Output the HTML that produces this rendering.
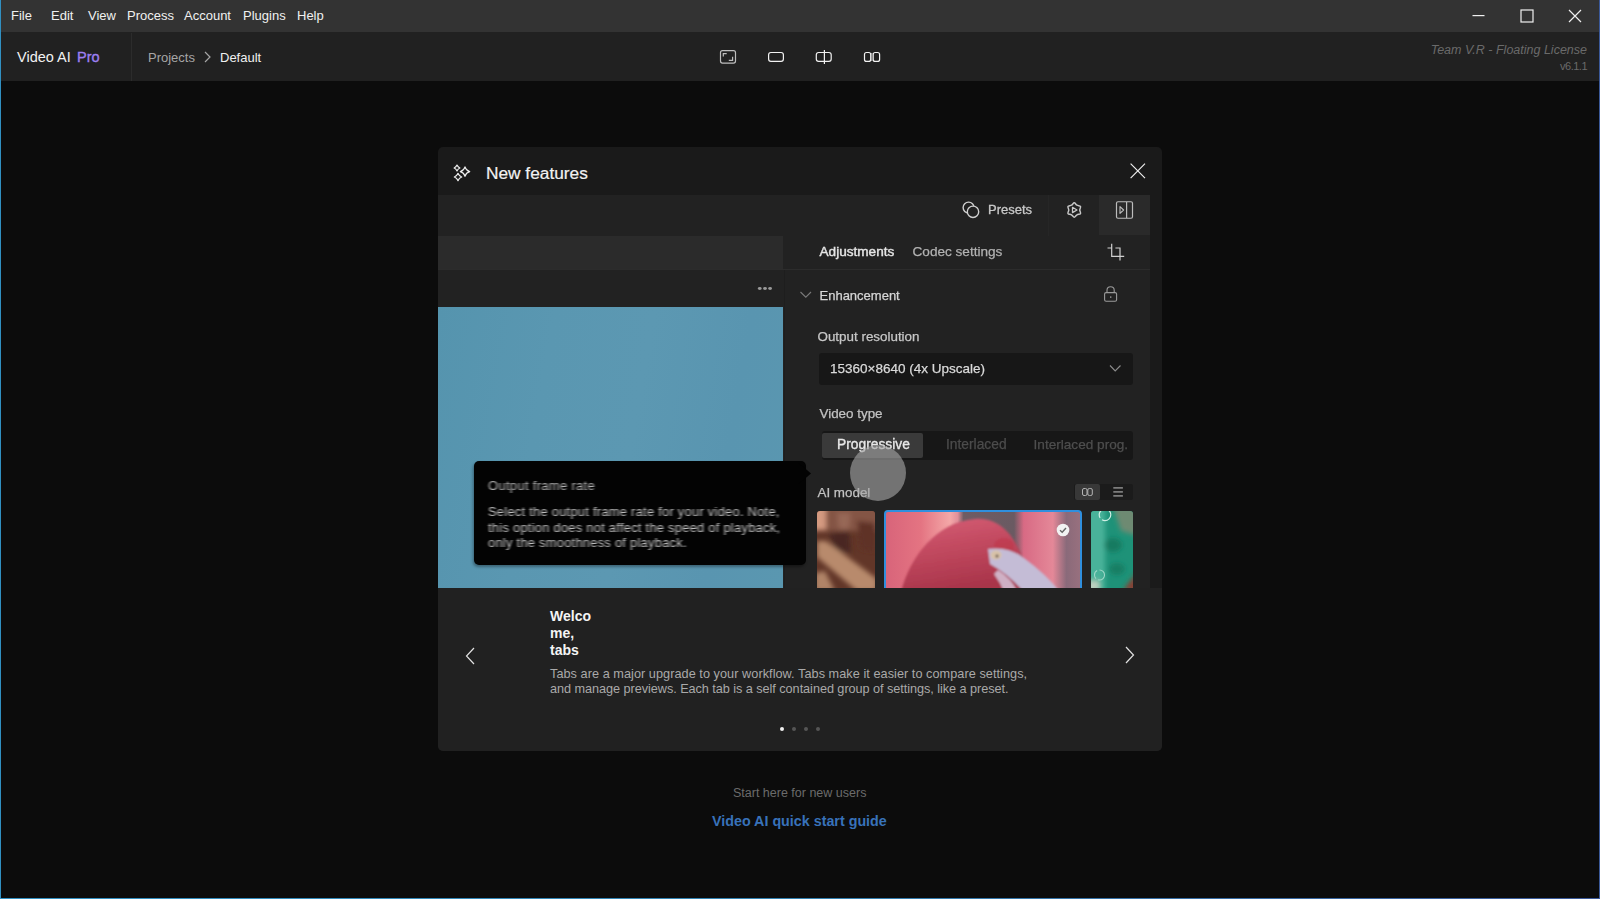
<!DOCTYPE html>
<html><head><meta charset="utf-8">
<style>
*{margin:0;padding:0;box-sizing:border-box}
html,body{width:1600px;height:899px;overflow:hidden;background:#0c0c0c;font-family:"Liberation Sans",sans-serif}
.t{position:absolute;white-space:nowrap}
.abs{position:absolute}
#menubar{position:absolute;left:0;top:0;width:1600px;height:32px;background:#333333}
#menubar .m{position:absolute;top:8px;font-size:13px;color:#f0f0f0;line-height:16px}
#header{position:absolute;left:0;top:32px;width:1600px;height:49px;background:#212121}
#bl{position:absolute;left:0;top:0;width:1px;height:899px;background:#3190c2}
#br{position:absolute;right:0;top:0;width:1px;height:899px;background:#3a5898}
#bb{position:absolute;left:0;bottom:0;width:1600px;height:1px;background:linear-gradient(90deg,#3190c2,#3080b0 50%,#3a5898)}
#modal{position:absolute;left:438px;top:147px;width:724px;height:604px;background:#1a1a1a;border-radius:5px;overflow:hidden}
#shot{position:absolute;left:0;top:48px;width:712px;height:393px;background:#222;overflow:hidden}
#bottom{position:absolute;left:0;top:441px;width:724px;height:163px;background:#212121}
.blur{filter:blur(0.5px)}
.t.blur{-webkit-text-stroke-width:0.25px}
</style></head><body>
<div id="menubar">
  <div class="m" style="left:11px">File</div>
  <div class="m" style="left:51px">Edit</div>
  <div class="m" style="left:88px">View</div>
  <div class="m" style="left:127px">Process</div>
  <div class="m" style="left:184px">Account</div>
  <div class="m" style="left:243px">Plugins</div>
  <div class="m" style="left:297px">Help</div>
  <!-- window controls -->
  <svg class="abs" style="left:1460px;top:0" width="140" height="32" viewBox="0 0 140 32">
    <rect x="12.5" y="15" width="12" height="1.2" fill="#f0f0f0"/>
    <rect x="61" y="10" width="12" height="12" fill="none" stroke="#f0f0f0" stroke-width="1.2"/>
    <path d="M109 10 L121 22 M121 10 L109 22" stroke="#f0f0f0" stroke-width="1.2"/>
  </svg>
</div>
<div id="header">
  <div class="t" style="left:17px;top:17.6px;font-size:14.5px;line-height:14px;color:#f2f2f2">Video AI</div>
  <div class="t" style="left:77px;top:17.6px;font-size:14.5px;line-height:14px;color:#9d7ff2;-webkit-text-stroke:0.35px #9d7ff2">Pro</div>
  <div class="abs" style="left:131px;top:1px;width:1px;height:48px;background:#2c2c2c"></div>
  <div class="t" style="left:148px;top:19px;font-size:13px;line-height:13px;color:#a6a6a6">Projects</div>
  <svg class="abs" style="left:202px;top:18px" width="10" height="14" viewBox="0 0 10 14"><path d="M3 2 L8 7 L3 12" fill="none" stroke="#a6a6a6" stroke-width="1.2"/></svg>
  <div class="t" style="left:220px;top:19px;font-size:13px;line-height:13px;color:#f0f0f0">Default</div>
  <!-- view icons -->
  <svg class="abs" style="left:710px;top:10px" width="180" height="30" viewBox="0 0 180 30">
    <rect x="10.5" y="8.7" width="15" height="12.4" rx="2" fill="none" stroke="#bdbdbd" stroke-width="1.2"/>
    <path d="M13.3 14.6 V11.6 H16.7" fill="none" stroke="#bdbdbd" stroke-width="1.2"/>
    <path d="M18.8 18.3 H22.6 V14.8" fill="none" stroke="#bdbdbd" stroke-width="1.2"/>
    <rect x="58.6" y="10.5" width="14.8" height="8.9" rx="2.3" fill="none" stroke="#f2f2f2" stroke-width="1.2"/>
    <rect x="106.3" y="10.5" width="14.9" height="8.9" rx="2.3" fill="none" stroke="#f2f2f2" stroke-width="1.2"/>
    <path d="M114.4 7.9 V22" stroke="#f2f2f2" stroke-width="1.2"/>
    <rect x="154.5" y="10.5" width="6.2" height="8.9" rx="2" fill="none" stroke="#f2f2f2" stroke-width="1.2"/>
    <rect x="163.2" y="10.5" width="6.4" height="8.9" rx="2" fill="none" stroke="#f2f2f2" stroke-width="1.2"/>
    <rect x="161" y="11" width="1.6" height="8" fill="#9a9a9a"/>
  </svg>
  <div class="t" style="right:13px;top:11.8px;font-size:12.5px;line-height:13px;color:#6a6a6a;font-style:italic">Team V.R - Floating License</div>
  <div class="t" style="right:13px;top:27.5px;font-size:11px;line-height:13px;color:#6a6a6a;letter-spacing:-0.5px">v6.1.1</div>
</div>

<div id="modal">
  <!-- header -->
  <svg class="abs" style="left:14px;top:16px" width="20" height="20" viewBox="0 0 20 20"><path d="M5 2.1 Q5.87 4.13 7.9 5 Q5.87 5.87 5 7.9 Q4.13 5.87 2.1 5 Q4.13 4.13 5 2.1Z" fill="none" stroke="#ececec" stroke-width="1.2" stroke-linejoin="round"/><path d="M13 3.8999999999999995 Q14.03 7.57 17.7 8.6 Q14.03 9.63 13 13.3 Q11.97 9.63 8.3 8.6 Q11.97 7.57 13 3.8999999999999995Z" fill="none" stroke="#ececec" stroke-width="1.2" stroke-linejoin="round"/><path d="M6 10.3 Q7.04 12.96 9.7 14 Q7.04 15.04 6 17.7 Q4.96 15.04 2.3 14 Q4.96 12.96 6 10.3Z" fill="none" stroke="#ececec" stroke-width="1.2" stroke-linejoin="round"/></svg>
  <div class="t" style="left:48px;top:17.8px;font-size:17.3px;line-height:17px;color:#f2f2f2;-webkit-text-stroke:0.2px #f2f2f2">New features</div>
  <svg class="abs" style="left:690px;top:15px" width="20" height="20" viewBox="0 0 20 20">
    <path d="M2.6 1.6 L17 16.1 M17 1.6 L2.6 16.1" stroke="#f0f0f0" stroke-width="1.15"/>
  </svg>

  <!-- embedded screenshot -->
  <div id="shot">
    <!-- top toolbar -->
    <svg class="abs blur" style="left:520px;top:4px" width="30" height="30" viewBox="0 0 30 30">
      <circle cx="10.6" cy="8.6" r="5.5" fill="none" stroke="#d0d0d0" stroke-width="1.4"/>
      <circle cx="15" cy="12.8" r="5.7" fill="#222" stroke="#d0d0d0" stroke-width="1.4"/>
    </svg>
    <div class="t blur" style="left:550px;top:8.4px;font-size:13px;line-height:13px;color:#c8c8c8;-webkit-text-stroke:0.3px #c8c8c8">Presets</div>
    <div class="abs" style="left:610px;top:0;width:1px;height:41px;background:#262626"></div>
    <svg class="abs blur" style="left:626px;top:4.75px" width="20" height="20" viewBox="0 0 20 20">
      <path d="M10.25 2.80 C11.30 2.80 11.80 4.55 13.00 5.24 C14.20 5.93 15.96 5.49 16.49 6.40 C17.01 7.31 15.75 8.62 15.75 10.00 C15.75 11.38 17.01 12.69 16.49 13.60 C15.96 14.51 14.20 14.07 13.00 14.76 C11.80 15.45 11.30 17.20 10.25 17.20 C9.20 17.20 8.70 15.45 7.50 14.76 C6.30 14.07 4.54 14.51 4.01 13.60 C3.49 12.69 4.75 11.38 4.75 10.00 C4.75 8.62 3.49 7.31 4.01 6.40 C4.54 5.49 6.30 5.93 7.50 5.24 C8.70 4.55 9.20 2.80 10.25 2.80Z" fill="none" stroke="#c8c8c8" stroke-width="1.45"/>
      <path d="M8.5 7.3 L13 9.95 L8.5 12.6Z" fill="none" stroke="#c8c8c8" stroke-width="1.3" stroke-linejoin="round"/>
    </svg>
    <div class="abs" style="left:661px;top:0;width:51px;height:40px;background:#2a2a2a"></div>
    <svg class="abs blur" style="left:676px;top:4px" width="22" height="22" viewBox="0 0 22 22">
      <rect x="2.5" y="2.75" width="16" height="16.5" rx="1.5" fill="none" stroke="#bcbcbc" stroke-width="1.2"/>
      <path d="M12.6 3 V19" stroke="#bcbcbc" stroke-width="1.2"/>
      <path d="M6 7.6 L9.6 11 L6 14.4Z" fill="none" stroke="#bcbcbc" stroke-width="1.1" stroke-linejoin="round"/>
    </svg>

    <!-- left pane -->
    <div class="abs" style="left:0;top:41px;width:345px;height:33px;background:#2b2b2b"></div>
    <div class="abs" style="left:0;top:74px;width:712px;height:1px;background:#2c2c2c"></div>
    <div class="abs" style="left:346px;top:75px;width:1px;height:318px;background:#1e1e1e"></div>
    <svg class="abs" style="left:316px;top:88px" width="22" height="12" viewBox="0 0 22 12"><g fill="#9a9a9a" style="filter:blur(0.5px)"><ellipse cx="5.75" cy="5.5" rx="1.9" ry="1.4"/><ellipse cx="11" cy="5.5" rx="1.9" ry="1.4"/><ellipse cx="16.1" cy="5.5" rx="1.9" ry="1.4"/></g></svg>
    <div class="abs" style="left:0;top:112px;width:345px;height:281px;background:linear-gradient(100deg,#5594ae 0%,#5a97b1 30%,#5c98b2 55%,#5995b0 80%,#5a97b0 100%)"></div>

    <!-- right pane -->
    <div class="t blur" style="left:381.5px;top:50px;font-size:13.6px;line-height:13px;color:#e6e6e6;-webkit-text-stroke:0.4px #e6e6e6">Adjustments</div>
    <div class="t blur" style="left:474.5px;top:50px;font-size:13.6px;line-height:13px;color:#b2b2b2">Codec settings</div>
    <svg class="abs blur" style="left:666px;top:46px" width="24" height="24" viewBox="0 0 24 24">
      <path d="M3.5 7 H7.7 M7.7 2.8 V15.3 H20.2 M11.4 7 H16 V15.3 M16 15.3 V19.5" fill="none" stroke="#d0d0d0" stroke-width="1.2"/>
    </svg>
    <svg class="abs blur" style="left:360px;top:94px" width="16" height="12" viewBox="0 0 16 12">
      <path d="M2.5 3 L7.8 8.2 L13 3" fill="none" stroke="#7a7a7a" stroke-width="1.1"/>
    </svg>
    <div class="t blur" style="left:381.5px;top:93.8px;font-size:13px;line-height:13px;color:#d6d6d6">Enhancement</div>
    <svg class="abs blur" style="left:664px;top:90px" width="18" height="18" viewBox="0 0 18 18">
      <path d="M5 7.5 V5.3 Q5 1.8 8.6 1.8 Q12.2 1.8 12.2 5.3 V7.5" fill="none" stroke="#9a9a9a" stroke-width="1.1"/>
      <rect x="2.6" y="7.6" width="12" height="8.6" rx="1.5" fill="none" stroke="#9a9a9a" stroke-width="1.1"/>
      <rect x="8" y="11.4" width="1.4" height="1.4" fill="#9a9a9a"/>
    </svg>
    <div class="t blur" style="left:379.5px;top:134.5px;font-size:13.4px;line-height:13px;color:#c8c8c8">Output resolution</div>
    <div class="abs" style="left:380.5px;top:157.5px;width:314px;height:32px;background:#171717;border-radius:3px"></div>
    <div class="t blur" style="left:392px;top:167.2px;font-size:13.5px;line-height:13px;color:#dadada">15360×8640 (4x Upscale)</div>
    <svg class="abs blur" style="left:670px;top:167px" width="14" height="12" viewBox="0 0 14 12">
      <path d="M2 3.5 L7.2 9 L12.5 3.5" fill="none" stroke="#8c8c8c" stroke-width="1.1"/>
    </svg>
    <div class="t blur" style="left:381.5px;top:212px;font-size:13.4px;line-height:13px;color:#c2c2c2">Video type</div>
    <div class="abs" style="left:384px;top:235.5px;width:310.5px;height:29.5px;background:#171717;border-radius:3px"></div>
    <div class="abs" style="left:384px;top:237.7px;width:100.5px;height:25.6px;background:#3a3a3a;border-radius:2px"></div>
    <div class="t blur" style="left:399px;top:243.1px;font-size:13.8px;line-height:13px;color:#e8e8e8;-webkit-text-stroke:0.35px #e8e8e8">Progressive</div>
    <div class="t blur" style="left:508px;top:243.1px;font-size:13.8px;line-height:13px;color:#4c4c4c">Interlaced</div>
    <div class="t blur" style="left:595.6px;top:243.1px;font-size:13.6px;line-height:13px;color:#4e4e4e">Interlaced prog.</div>
    <div class="t blur" style="left:379.5px;top:291px;font-size:13.4px;line-height:13px;color:#c2c2c2">AI model</div>
    <div class="abs" style="left:636px;top:288.7px;width:58.5px;height:16.5px;background:#1b1b1b;border-radius:2px"></div>
    <div class="abs" style="left:636.5px;top:288.7px;width:25.5px;height:16.5px;background:#383838;border-radius:2px"></div>
    <svg class="abs blur" style="left:636px;top:288px" width="60" height="18" viewBox="0 0 60 18">
      <rect x="8.5" y="5.5" width="4.5" height="7" rx="1.5" fill="none" stroke="#b4b4b4" stroke-width="1"/>
      <rect x="13.8" y="5.5" width="4.5" height="7" rx="1.5" fill="none" stroke="#b4b4b4" stroke-width="1"/>
      <path d="M39.3 4.9 H48.9 M39.3 8.9 H48.9 M39.3 12.9 H48.9" stroke="#7c7c7c" stroke-width="1.7"/>
    </svg>
    <!-- thumbnails -->
    <div class="abs" style="left:379px;top:316px;width:58px;height:77px;border-radius:3px 3px 0 0;overflow:hidden;background:#623628">
      <svg class="abs" style="left:0;top:0" width="58" height="77" viewBox="0 0 58 77"><filter id="fh" x="-20%" y="-20%" width="140%" height="140%"><feGaussianBlur stdDeviation="2.4"/></filter><g filter="url(#fh)">
        <rect x="-5" y="-5" width="70" height="25" fill="#845444"/>
        <rect x="-5" y="-5" width="14" height="24" fill="#d49a80"/>
        <path d="M12 22 L32 20 L34 42 L18 40Z" fill="#4a2820"/>
        <path d="M40 10 L58 12 L58 40 L44 38Z" fill="#5e3026"/>
        <path d="M0 30 L9 30 L60 68 L60 80 L40 80 L0 46Z" fill="#b88a6c"/>
        <path d="M-2 62 L8 60 L18 80 L-2 80Z" fill="#b08468"/>
        <path d="M20 2 L34 2 L32 18 L22 18Z" fill="#a07060" opacity="0.7"/>
      </g></svg>
    </div>
    <div class="abs" style="left:445.8px;top:315px;width:198.4px;height:78px;border:2px solid #2f8fde;border-bottom:none;border-radius:4px 4px 0 0;overflow:hidden;background:linear-gradient(90deg,#d8647a 0%,#e47482 18%,#f4a8a8 33%,#e0909a 37%,#6e5c64 40%,#6a5a62 66%,#d86a84 71%,#e48898 86%,#8a6a7a 93%,#98707e 100%)">
      <svg class="abs" style="left:0;top:0" width="196" height="78" viewBox="0 0 196 78"><filter id="ff" x="-10%" y="-10%" width="120%" height="120%"><feGaussianBlur stdDeviation="1.3"/></filter><g filter="url(#ff)">
        <linearGradient id="hg" x1="0" y1="0" x2="0.3" y2="1"><stop offset="0" stop-color="#d65e76"/><stop offset="0.5" stop-color="#c0485e"/><stop offset="1" stop-color="#a8344a"/></linearGradient><path d="M15 80 C24 45 50 10 89 7 C112 5 128 22 137 47 L150 80Z" fill="url(#hg)"/>
        <ellipse cx="118" cy="34" rx="10" ry="8" fill="#c02a3c" opacity="0.35"/>
        <path d="M102 37 Q122 34 138 46 Q160 62 174 80 L138 80 Q122 62 104 52Z" fill="#c4bcd6"/><path d="M112 58 Q125 66 132 80 L118 80 Q114 70 108 62Z" fill="#d8d0e4" opacity="0.8"/>
        <ellipse cx="110" cy="43" rx="5.5" ry="4.5" fill="#d8c2a8"/>
        <circle cx="111" cy="44" r="1.5" fill="#5a4a40"/>
      </g></svg>
      <svg class="abs" style="left:170.6px;top:11px" width="14" height="14" viewBox="0 0 14 14">
        <circle cx="7" cy="7" r="6.3" fill="#f2f2f2"/>
        <path d="M4 7.2 L6.2 9.3 L10 5" fill="none" stroke="#666" stroke-width="1.4"/>
      </svg>
    </div>
    <div class="abs" style="left:652.5px;top:316px;width:42.5px;height:77px;border-radius:3px 3px 0 0;overflow:hidden;background:#1e9278">
      <svg class="abs" style="left:0;top:0" width="43" height="77" viewBox="0 0 43 77"><filter id="ft" x="-20%" y="-20%" width="140%" height="140%"><feGaussianBlur stdDeviation="2.6"/></filter><g filter="url(#ft)">
        <rect x="-4" y="-4" width="18" height="85" fill="#48b29a"/>
        <path d="M22 -4 L47 -4 L47 25 L30 20Z" fill="#6e8a72"/>
        <ellipse cx="22" cy="34" rx="9" ry="7" fill="#127a60"/>
        <ellipse cx="26" cy="58" rx="8" ry="6" fill="#157e64"/>
        <path d="M34 77 L47 60 L47 80 L32 80Z" fill="#8a3c30"/>
        <rect x="-4" y="70" width="12" height="10" fill="#c0d0c0"/>
      </g></svg>
      <svg class="abs" style="left:0;top:0;filter:blur(0.5px)" width="43" height="77" viewBox="0 0 43 77">
        <circle cx="14" cy="3.8" r="5.8" fill="none" stroke="#cfeee4" stroke-width="1.2" stroke-dasharray="12 2.5"/>
        <circle cx="8.5" cy="64" r="5" fill="none" stroke="#9ed8c8" stroke-width="1.1" stroke-dasharray="9 2.5"/>
      </svg>
    </div>
    <!-- touch indicator -->
    <div class="abs" style="left:412px;top:250px;width:56px;height:56px;border-radius:50%;background:rgba(165,165,165,0.62);filter:blur(0.6px)"></div>
    <!-- tooltip -->
    <div class="abs" style="left:35.5px;top:266.3px;width:332px;height:104px;background:#030303;border-radius:5px;box-shadow:-1px 2px 3px rgba(0,0,0,0.35)"></div>
    <svg class="abs" style="left:360px;top:268px" width="16" height="22" viewBox="0 0 16 22"><path d="M0 0 L6 4.5 L13 10.6 L6 16.5 L0 21Z" fill="#030303"/></svg>
    <svg class="abs" style="left:0;top:0;width:0;height:0"><filter id="hb"><feGaussianBlur stdDeviation="1.1 0.35"/></filter></svg>
    <div class="t" style="left:50px;top:283.8px;font-size:13px;line-height:13px;color:#b4b4b4;filter:url(#hb);letter-spacing:0.3px">Output frame rate</div>
    <div class="t" style="left:50px;top:309px;font-size:12.8px;line-height:15.5px;color:#c0c0c0;filter:url(#hb);letter-spacing:0.3px">Select the output frame rate for your video. Note,<br>this option does not affect the speed of playback,<br>only the smoothness of playback.</div>
  </div>

  <!-- bottom section -->
  <div id="bottom">
    <svg class="abs" style="left:23px;top:57px" width="16" height="22" viewBox="0 0 16 22">
      <path d="M13 3 L5.5 11 L13 19" fill="none" stroke="#e0e0e0" stroke-width="1.2"/>
    </svg>
    <svg class="abs" style="left:684px;top:56px" width="16" height="22" viewBox="0 0 16 22">
      <path d="M4 3 L11.5 11 L4 19" fill="none" stroke="#e0e0e0" stroke-width="1.2"/>
    </svg>
    <div class="t" style="left:112px;top:20px;font-size:14px;line-height:17px;color:#f4f4f4;font-weight:bold">Welco<br>me,<br>tabs</div>
    <div class="t" style="left:112px;top:78.5px;font-size:12.7px;line-height:15px;color:#a9a9a9"><span style="letter-spacing:0.05px">Tabs are a major upgrade to your workflow. Tabs make it easier to compare settings,</span><br><span style="letter-spacing:-0.05px">and manage previews. Each tab is a self contained group of settings, like a preset.</span></div>
        <div class="abs" style="left:342px;top:138.7px;width:4px;height:4px;border-radius:50%;background:#f0f0f0"></div>
    <div class="abs" style="left:354px;top:138.7px;width:4px;height:4px;border-radius:50%;background:#555"></div>
    <div class="abs" style="left:366px;top:138.7px;width:4px;height:4px;border-radius:50%;background:#555"></div>
    <div class="abs" style="left:377.5px;top:138.7px;width:4px;height:4px;border-radius:50%;background:#555"></div>
  </div>
</div>

<div class="t" style="left:733px;top:786.5px;font-size:12.5px;line-height:13px;color:#6b6b6b">Start here for new users</div>
<div class="t" style="left:712px;top:813.5px;font-size:14.3px;line-height:14px;color:#3872ba;font-weight:bold">Video AI quick start guide</div>

<div id="bl"></div><div id="br"></div><div id="bb"></div>
</body></html>
